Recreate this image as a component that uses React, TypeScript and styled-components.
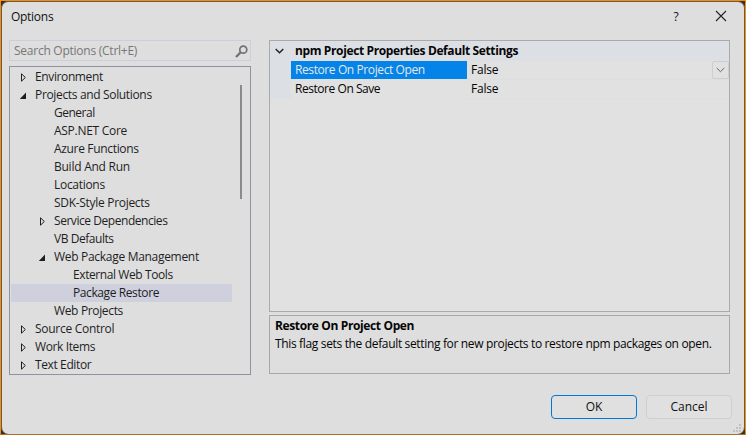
import React from "react";
import styled, { createGlobalStyle } from "styled-components";

const GlobalStyle = createGlobalStyle`
  * { box-sizing: border-box; }
  html, body { margin: 0; padding: 0; background: #2b2b2b; overflow: hidden; }
  body { font: 12px/18px "Open Sans", "Noto Sans", sans-serif; color: #1e1e1e; }
`;

const Frame = styled.div`
  width: 746px;
  height: 435px;
  border: 1px solid #ff8c00;
  border-bottom-color: #b06c20;
  background: #303030;
`;
const Dialog = styled.div`
  height: 433px;
  border: 1px solid #5c5c5c;
  border-bottom: 0;
  border-radius: 7px;
  background: #dedede;
  display: flex;
  flex-direction: column;
  position: relative;
`;
const TitleBar = styled.header`
  height: 38px;
  flex: none;
  display: flex;
  align-items: flex-start;
  padding: 5px 17px 0 9px;
  color: #111;
`;
const Title = styled.div`
  flex: 1;
  line-height: 20px;
`;
const Help = styled.div`
  width: 12px;
  height: 20px;
  margin-right: 33px;
  line-height: 20px;
  text-align: center;
`;
const Text = styled.span<{ $track?: number }>`
  white-space: nowrap;
  letter-spacing: ${(p) => p.$track ?? -0.2}px;
`;
const Content = styled.main`
  display: flex;
  gap: 18px;
  padding-left: 7px;
  height: 335px;
`;
const Left = styled.section`
  width: 242px;
  display: flex;
  flex-direction: column;
  gap: 5px;
`;
const Search = styled.div`
  height: 21px;
  border: 1px solid #cccedb;
  display: flex;
  align-items: center;
  justify-content: space-between;
  padding: 1px 2px 0 4px;
  color: #777;
`;
const Tree = styled.div`
  height: 309px;
  border: 1px solid #9192a0;
  padding: 1px;
  display: flex;
  overflow: hidden;
`;
const Rows = styled.div`
  width: 221px;
`;
const Row = styled.div<{ $depth: number; $selected?: boolean }>`
  height: 18px;
  padding-left: ${(p) => 8 + p.$depth * 19}px;
  display: flex;
  background: ${(p) => (p.$selected ? "#ced0de" : "transparent")};
`;
const Arrow = styled.span`
  width: 16px;
  height: 18px;
  display: flex;
  align-items: center;
`;
const Scroll = styled.div`
  width: 2px;
  height: 114px;
  margin: 17px 0 0 8px;
  background: #8a8a8a;
`;
const Right = styled.section`
  width: 461px;
  display: flex;
  flex-direction: column;
  gap: 3px;
  color: #050505;
`;
const Grid = styled.div`
  height: 272px;
  border: 1px solid #a8aaae;
  background: #e1e1e1;
`;
const Category = styled.div`
  height: 20px;
  display: flex;
  line-height: 20px;
  background: #dce0e5;
  font-weight: 700;
`;
const Gutter = styled.span`
  width: 21px;
  align-self: stretch;
  background: #dce0e5;
  display: flex;
  align-items: center;
  padding-left: 5px;
  flex: none;
`;
const CategoryName = styled.div`
  padding-left: 4px;
`;
const Property = styled.div`
  height: 19px;
  display: flex;
`;
const Name = styled.div<{ $active?: boolean }>`
  width: 176px;
  height: 18px;
  padding-left: 4px;
  background: ${(p) => (p.$active ? "#0484e8" : "transparent")};
  color: ${(p) => (p.$active ? "#e6e6e6" : "inherit")};
`;
const Value = styled.div`
  flex: 1;
  display: flex;
  justify-content: space-between;
  padding-left: 4px;
  border-bottom: 1px solid #dcdee3;
`;
const DropButton = styled.span`
  width: 17px;
  height: 18px;
  border: 1px solid #cecece;
  border-radius: 2px;
  display: flex;
  align-items: center;
  justify-content: center;
`;
const Description = styled.div`
  height: 59px;
  border: 1px solid #a8a8a8;
  padding: 1px 5px;
  display: flex;
  flex-direction: column;
`;
const Heading = styled.div`
  height: 18px;
  font-weight: 700;
`;
const Footer = styled.footer`
  display: flex;
  justify-content: flex-end;
  gap: 9px;
  padding: 20px 12px 0 0;
`;
const Button = styled.button<{ $primary?: boolean }>`
  width: 86px;
  height: 24px;
  padding: 0;
  font: inherit;
  color: #111;
  border: 1px solid ${(p) => (p.$primary ? "#0078d4" : "#cfcfcf")};
  border-radius: 4px;
  background: #e0e0e0;
`;
const Grip = styled.svg`
  position: absolute;
  right: 3px;
  bottom: 2px;
`;

type Item = [label: string, depth: number, track: number, state?: "open" | "closed"];
const items: Item[] = [
  ["Environment", 0, -0.38, "closed"],
  ["Projects and Solutions", 0, -0.34, "open"],
  ["General", 1, -0.5],
  ["ASP.NET Core", 1, -0.28],
  ["Azure Functions", 1, -0.33],
  ["Build And Run", 1, -0.25],
  ["Locations", 1, -0.3],
  ["SDK-Style Projects", 1, -0.3],
  ["Service Dependencies", 1, -0.45, "closed"],
  ["VB Defaults", 1, -0.45],
  ["Web Package Management", 1, -0.3, "open"],
  ["External Web Tools", 2, -0.41],
  ["Package Restore", 2, -0.4],
  ["Web Projects", 1, -0.35],
  ["Source Control", 0, -0.28, "closed"],
  ["Work Items", 0, -0.38, "closed"],
  ["Text Editor", 0, -0.38, "closed"],
];

const Chevron = ({ color, weight }: { color: string; weight: number }) => (
  <svg width="9" height="6" viewBox="0 0 9 6" fill="none" stroke={color} strokeWidth={weight}>
    <path d="M.7 1 4.5 4.7 8.3 1" />
  </svg>
);

export default function App() {
  return (
    <Frame>
      <GlobalStyle />
      <Dialog>
        <TitleBar>
          <Title><Text $track={-0.28}>Options</Text></Title>
          <Help>?</Help>
          <svg width="12" height="20" viewBox="0 0 12 20" fill="none" stroke="#222" strokeWidth="1.1">
            <path d="m1 4 10 10M11 4 1 14" />
          </svg>
        </TitleBar>
        <Content>
          <Left>
            <Search>
              <Text $track={-0.25}>Search Options (Ctrl+E)</Text>
              <svg width="13" height="13" viewBox="0 0 13 13" fill="none" stroke="#717171">
                <circle cx="8.3" cy="4.7" r="3.5" strokeWidth="1.7" />
                <path d="M5.7 7.3 1 12" strokeWidth="2.3" />
              </svg>
            </Search>
            <Tree>
              <Rows>
                {items.map(([label, depth, track, state]) => (
                  <Row key={label} $depth={depth} $selected={label === "Package Restore"}>
                    <Arrow>
                      {state === "closed" && (
                        <svg width="9" height="9" viewBox="0 0 9 9" fill="none" stroke="#1e1e1e">
                          <path d="M2.5 .8 6.3 4.5 2.5 8.2Z" />
                        </svg>
                      )}
                      {state === "open" && (
                        <svg width="9" height="9" viewBox="0 0 9 9" fill="#1e1e1e">
                          <path d="M7 1.5V8H.8Z" />
                        </svg>
                      )}
                    </Arrow>
                    <Text $track={track}>{label}</Text>
                  </Row>
                ))}
              </Rows>
              <Scroll />
            </Tree>
          </Left>
          <Right>
            <Grid>
              <Category>
                <Gutter><Chevron color="#222" weight={1.5} /></Gutter>
                <CategoryName><Text $track={-0.38}>npm Project Properties Default Settings</Text></CategoryName>
              </Category>
              <Property>
                <Gutter />
                <Name $active><Text $track={-0.4}>Restore On Project Open</Text></Name>
                <Value>
                  <Text>False</Text>
                  <DropButton><Chevron color="#666" weight={1} /></DropButton>
                </Value>
              </Property>
              <Property>
                <Gutter />
                <Name><Text $track={-0.45}>Restore On Save</Text></Name>
                <Value><Text>False</Text></Value>
              </Property>
            </Grid>
            <Description>
              <Heading><Text $track={-0.37}>Restore On Project Open</Text></Heading>
              <Text $track={-0.342}>This flag sets the default setting for new projects to restore npm packages on open.</Text>
            </Description>
          </Right>
        </Content>
        <Footer>
          <Button $primary><Text>OK</Text></Button>
          <Button><Text $track={-0.05}>Cancel</Text></Button>
        </Footer>
        <Grip width="8" height="8" fill="#c2c2c2">
          <path d="M6 0h2v2H6zM3 3h2v2H3zM6 3h2v2H6zM0 6h2v2H0zM3 6h2v2H3zM6 6h2v2H6z" />
        </Grip>
      </Dialog>
    </Frame>
  );
}
